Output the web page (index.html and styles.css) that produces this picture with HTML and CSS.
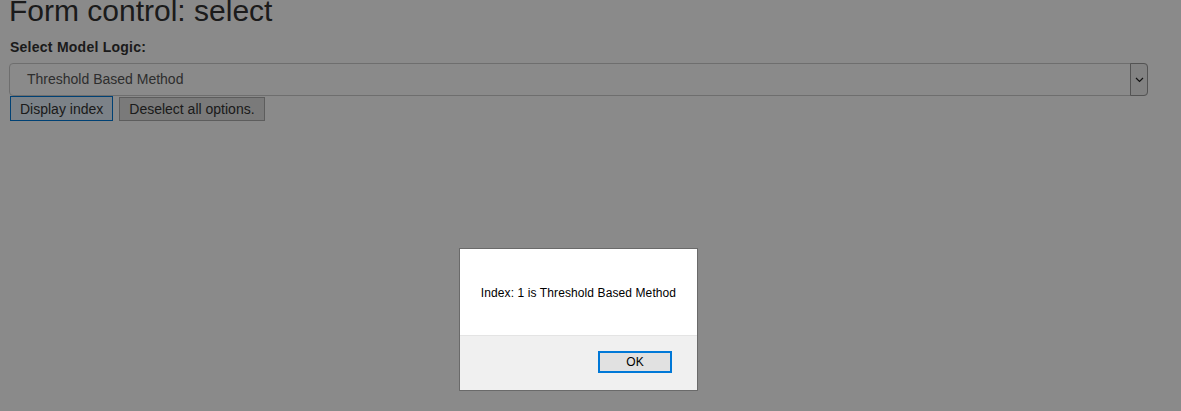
FILE: index.html
```html
<!DOCTYPE html>
<html>
<head>
<meta charset="utf-8">
<link rel="stylesheet" href="styles.css">
</head>
<body>
<div class="page">
  <h1 class="title">Form control: select</h1>
  <label class="label">Select Model Logic:</label>
  <div class="select">
    <span class="select-text">Threshold Based Method</span>
    <span class="select-arrow">
      <svg width="9" height="6" viewBox="0 0 9 6"><path d="M1 1 L4.5 4.5 L8 1" fill="none" stroke="#222" stroke-width="1.2"/></svg>
    </span>
  </div>
  <div class="buttons">
    <button class="btn btn-focus">Display index</button>
    <button class="btn btn-plain">Deselect all options.</button>
  </div>
</div>
<div class="overlay"></div>
<div class="dialog">
  <div class="dialog-body">Index: 1 is Threshold Based Method</div>
  <div class="dialog-footer">
    <button class="ok">OK</button>
  </div>
</div>
</body>
</html>
```

FILE: styles.css
```css
html, body {
  margin: 0;
  padding: 0;
  background: #ffffff;
  width: 1181px;
  height: 411px;
  overflow: hidden;
  font-family: "Liberation Sans", Arial, sans-serif;
}

.page {
  padding: 0 33px 0 9px;
  display: flex;
  flex-direction: column;
}

.title {
  margin: -4px 0 0 0;
  font-size: 30px;
  line-height: 30px;
  font-weight: normal;
  color: #333333;
}

.label {
  margin-top: 13px;
  padding-left: 1px;
  font-size: 14px;
  font-weight: bold;
  letter-spacing: 0.25px;
  line-height: 16px;
  color: #333333;
}

.select {
  margin-top: 8px;
  height: 33px;
  box-sizing: border-box;
  border: 1px solid #cccccc;
  border-radius: 4px;
  background: #ffffff;
  display: flex;
  align-items: stretch;
}

.select-text {
  flex: 1;
  padding-left: 17px;
  font-size: 14px;
  line-height: 31px;
  color: #555555;
}

.select-arrow {
  width: 16px;
  border: 1px solid #9a9a9a;
  margin: -1px -1px -1px 0;
  border-radius: 0 4px 4px 0;
  background: #f0f0f0;
  display: flex;
  align-items: center;
  justify-content: center;
}

.buttons {
  display: flex;
  gap: 6px;
  padding-left: 1px;
}

.btn {
  height: 25px;
  box-sizing: border-box;
  font-family: "Liberation Sans", Arial, sans-serif;
  font-size: 14px;
  color: #333333;
  padding: 0 9px;
  margin: 0;
}

.btn-focus {
  background: #e5f1fb;
  border: 1px solid #0078d7;
}

.btn-plain {
  margin-top: 1px;
  height: 24px;
  background: #e1e1e1;
  border: 1px solid #adadad;
}

.overlay {
  position: absolute;
  left: 0;
  top: 0;
  width: 1181px;
  height: 411px;
  background: rgba(0, 0, 0, 0.46);
}

.dialog {
  position: absolute;
  left: 459px;
  top: 248px;
  width: 239px;
  height: 143px;
  box-sizing: border-box;
  border: 1px solid #6a6a6a;
  background: #ffffff;
  display: flex;
  flex-direction: column;
}

.dialog-body {
  height: 86px;
  display: flex;
  align-items: center;
  justify-content: center;
  padding-top: 1px;
  box-sizing: border-box;
  font-size: 12px;
  letter-spacing: 0.1px;
  color: #000000;
}

.dialog-footer {
  flex: 1;
  background: #f0f0f0;
  border-top: 1px solid #e4e4e4;
  display: flex;
  justify-content: flex-end;
  align-items: flex-start;
  padding: 15px 25px 0 0;
}

.ok {
  width: 74px;
  height: 22px;
  box-sizing: border-box;
  border: 2px solid #0078d7;
  background: #e1e1e1;
  font-family: "Liberation Sans", Arial, sans-serif;
  font-size: 12px;
  color: #000000;
  padding: 0;
  margin: 0;
}
```
